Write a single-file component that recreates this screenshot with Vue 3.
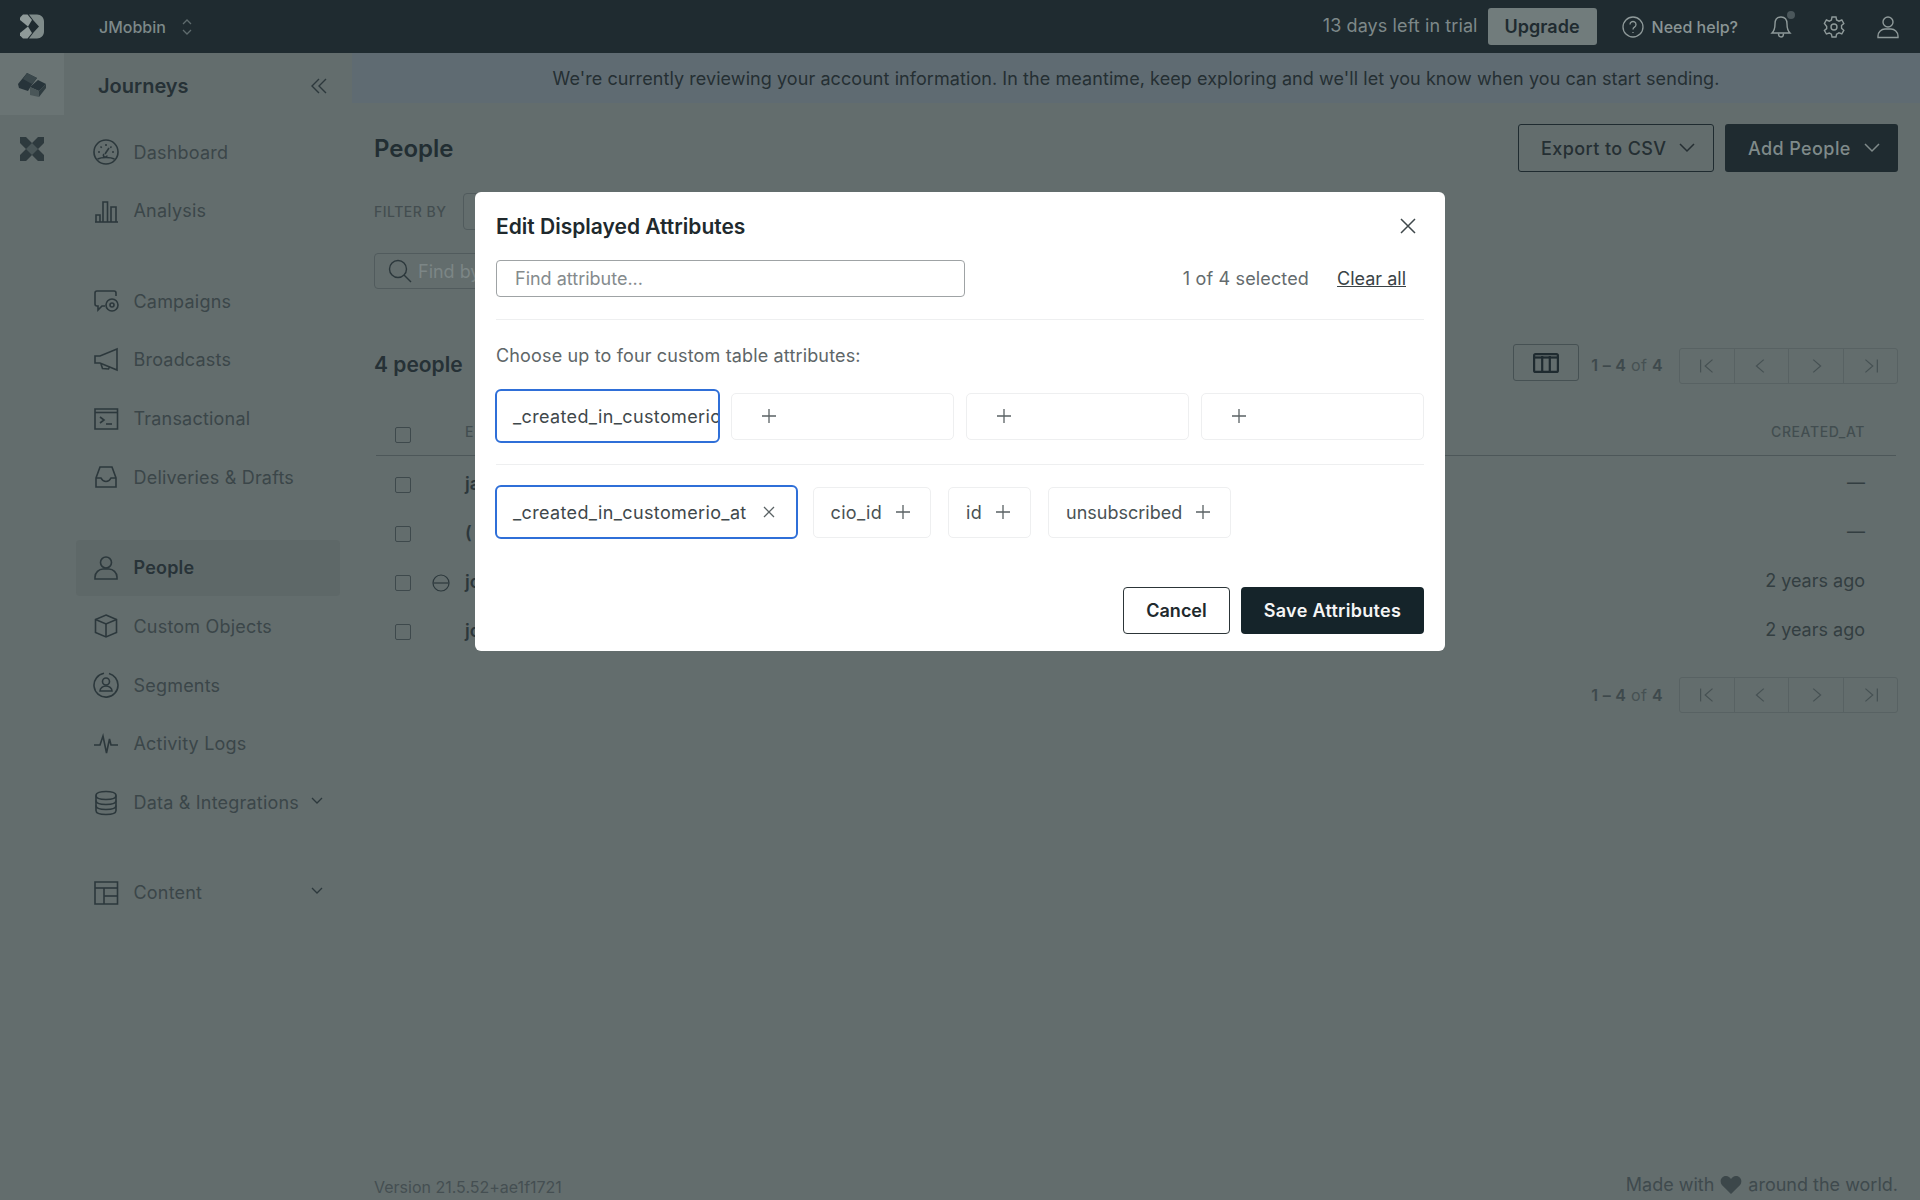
<script setup>
const navGroups = [
  [
    { label: 'Dashboard', icon: ['M13 1a12 12 0 1 0 0 24 12 12 0 0 0 0-24z', 'M13 5v2', 'M7.500 7.500l1.200 1.200', 'M18.500 7.500l-1.200 1.200', 'M5 13h2', 'M19 13h2', 'M12 15l4-6', 'M11 15a1.800 1.800 0 1 0 3 1.500', 'M4.500 20c4-2 13-2 17 0'] },
    { label: 'Analysis', icon: ['M2 24h23', 'M3 24v-7h4v7', 'M10 24V4h4.500v20', 'M18 24V9h5v15'] }
  ],
  [
    { label: 'Campaigns', icon: ['M23 8V5a2 2 0 0 0-2-2H4a2 2 0 0 0-2 2v11a2 2 0 0 0 2 2h1v4l4-4h3', 'M19 11a6 6 0 1 0 0 12 6 6 0 0 0 0-12z', 'M19 15a2 2 0 1 0 0 4 2 2 0 0 0 0-4z'] },
    { label: 'Broadcasts', icon: ['M24 2L7 9H2v7h5l17 7z', 'M8 17l1.500 4.500 6 .5 1-2'] },
    { label: 'Transactional', icon: ['M2 3h22.500v20H2z', 'M2 6.500h22.500', 'M7 11l4 3-4 3', 'M13 18h6'] },
    { label: 'Deliveries & Drafts', icon: ['M3 14L7 3h12l4 11v9H3z', 'M3 14h5c1 2 3 3.500 5 3.500s4-1.500 5-3.500h5'] }
  ],
  [
    { label: 'People', active: true, icon: ['M13 2a5.500 5.500 0 1 0 0 11 5.500 5.500 0 0 0 0-11z', 'M2 24v-2c0-4.500 4-8 8-8h6c4 0 8 3.500 8 8v2z'] },
    { label: 'Custom Objects', icon: ['M13 2l10.500 4.500v13L13 24 2.500 19.500v-13z', 'M2.500 6.500L13 11l10.500-4.500', 'M13 11v13'] },
    { label: 'Segments', icon: ['M11 1.300A12 12 0 1 0 25 13 12 12 0 0 0 16 1.500', 'M13 6a3.500 3.500 0 1 0 0 7 3.500 3.500 0 0 0 0-7z', 'M7 19c0-3 3-5 6-5s6 2 6 5z'] },
    { label: 'Activity Logs', icon: ['M1 14h6l3-9 3.500 17 3-14 1.500 6h7'] },
    { label: 'Data & Integrations', chevron: true, icon: ['M13 1.500c-5.500 0-10 1.500-10 4s4.500 4 10 4 10-1.500 10-4-4.500-4-10-4z', 'M3 5.500v15c0 2.500 4.500 4 10 4s10-1.500 10-4v-15', 'M3 10.500c0 2.500 4.500 4 10 4s10-1.500 10-4', 'M3 15.500c0 2.500 4.500 4 10 4s10-1.500 10-4'] }
  ],
  [
    { label: 'Content', chevron: true, icon: ['M2 2h22.500v22H2z', 'M2 8h22.500', 'M11 8v16', 'M11 16h13.500'] }
  ]
]

const pagerIcons = [
  ['M5 5v14', 'M18 5l-8 7 8 7'],
  ['M15 5l-8 7 8 7'],
  ['M9 5l8 7-8 7'],
  ['M7 5l8 7-8 7', 'M20 5v14']
]

const rows = [
  { text: 'ja', date: '—' },
  { text: '(', date: '—' },
  { text: 'jo', date: '2 years ago', blocked: true },
  { text: 'jo', date: '2 years ago' }
]

const emptySlots = [1, 2, 3]
const chips = ['cio_id', 'id', 'unsubscribed']
</script>

<template>
  <div class="page">
    <header class="topbar">
      <div class="logo-cell">
        <svg class="logo" viewBox="0 0 24 24" width="24" height="25">
          <path d="M0 3L3 0h4.500L12 5.500 8 12 0 5.500z" fill="#8f9a99" />
          <path d="M0 21l3 3h4.500L12 18.500 8 12 0 18.500z" fill="#8f9a99" />
          <path d="M9 0h8c4 0 7 3 7 7v10c0 4-3 7-7 7H9l4.500-6L19 12l-5.500-6z" fill="#7f8b8a" />
        </svg>
      </div>
      <div class="workspace">
        <span>JMobbin</span>
        <svg viewBox="0 0 12 18" width="12" height="18" fill="none" stroke="#5f6b6d" stroke-width="1.300">
          <path d="M2 6l4-4 4 4" />
          <path d="M2 12l4 4 4-4" />
        </svg>
      </div>
      <div class="top-right">
        <span class="trial">13 days left in trial</span>
        <span class="upgrade">Upgrade</span>
        <svg class="help-icon" viewBox="0 0 22 22" width="22" height="22" fill="none" stroke="#8f9a9a" stroke-width="1.300">
          <circle cx="11" cy="11" r="10" />
          <path d="M8 8.500a3 3 0 1 1 4.500 2.600c-1 .6-1.500 1.200-1.500 2.400" />
          <path d="M11 16v1" />
        </svg>
        <span class="help">Need help?</span>
        <span class="bell">
          <svg viewBox="0 0 22 24" width="22" height="24" fill="none" stroke="#8f9a9a" stroke-width="1.400">
            <path d="M11 2c-4 0-6 3-6 7 0 5-1 7-3 9h18c-2-2-3-4-3-9 0-4-2-7-6-7z" />
            <path d="M8.500 18.500c0 2 1 3.500 2.500 3.500s2.500-1.500 2.500-3.500" />
          </svg>
          <i class="dot"></i>
        </span>
        <svg class="gear" viewBox="0 0 24 24" width="24" height="24" fill="none" stroke="#8f9a9a" stroke-width="1.400">
          <circle cx="12" cy="12" r="3" />
          <path d="M10 2h4l.6 3 2.400 1.200 2.800-1.200 2 3.500-2.300 2 .1 2.900 2.200 1.900-2 3.500-2.800-1-2.400 1.400-.6 2.800h-4l-.6-2.800L7.300 18l-2.900 1-2-3.500 2.300-1.900V11.500L2.400 8.500l2-3.500 2.900 1.200L9.400 5z" />
        </svg>
        <svg class="user" viewBox="0 0 24 24" width="24" height="24" fill="none" stroke="#8f9a9a" stroke-width="1.400">
          <path d="M12 2a5 5 0 1 0 0 10 5 5 0 0 0 0-10z" />
          <path d="M2 22.500v-1.500c0-4 3.500-7 7-7h6c3.500 0 7 3 7 7v1.500z" />
        </svg>
      </div>
    </header>

    <div class="body">
      <aside class="rail">
        <div class="rail-item active">
          <svg viewBox="0 0 28 24" width="28" height="24">
            <path d="M0 11L9 0l10 5-6 8-3 5-9-3z" fill="#27343a" />
            <path d="M9 0l10 5-5 6-9-5z" fill="#3a474b" />
            <path d="M12 14l8-7 8 4-7 7z" fill="#27343a" />
            <path d="M12 14l9 4v6l-9-2z" fill="#4a5658" />
            <path d="M21 18l7-7v4l-7 9z" fill="#2f3c40" />
          </svg>
        </div>
        <div class="rail-item second">
          <svg viewBox="0 0 24 24" width="24" height="24">
            <path d="M0 0h6l6 6 6-6h6v6l-6 6 6 6v6h-6l-6-6-6 6H0v-6l6-6-6-6z" fill="#2e3a3e" />
            <path d="M12 6l6 6-6 6-6-6z" fill="#4a5658" />
          </svg>
        </div>
      </aside>

      <nav class="sidebar">
        <div class="side-title">
          <span>Journeys</span>
          <svg viewBox="0 0 18 16" width="18" height="16" fill="none" stroke="#2c383c" stroke-width="1.400">
            <path d="M9 1L2 8l7 7" />
            <path d="M16 1L9 8l7 7" />
          </svg>
        </div>
        <div v-for="(group, g) in navGroups" :key="g" class="nav-group" :class="{ first: g === 0 }">
          <div v-for="item in group" :key="item.label" class="nav-item" :class="{ active: item.active }">
            <svg class="nav-icon" viewBox="0 0 26 26" width="26" height="26" fill="none" stroke="#2c383c" stroke-width="1.600">
              <path v-for="d in item.icon" :key="d" :d="d" />
            </svg>
            <span class="nav-label">{{ item.label }}</span>
            <svg v-if="item.chevron" class="nav-chevron" viewBox="0 0 12 8" width="12" height="8" fill="none" stroke="#2c383c" stroke-width="1.300">
              <path d="M1 1l5 5 5-5" />
            </svg>
          </div>
        </div>
      </nav>

      <main class="main">
        <div class="banner">We're currently reviewing your account information. In the meantime, keep exploring and we'll let you know when you can start sending.</div>
        <div class="content">
          <div class="title-row">
            <h1>People</h1>
            <div class="actions">
              <span class="btn outline">Export to CSV
                <svg viewBox="0 0 16 10" width="16" height="10" fill="none" stroke="currentColor" stroke-width="1.500"><path d="M1 1l7 7 7-7" /></svg>
              </span>
              <span class="btn solid">Add People
                <svg viewBox="0 0 16 10" width="16" height="10" fill="none" stroke="currentColor" stroke-width="1.500"><path d="M1 1l7 7 7-7" /></svg>
              </span>
            </div>
          </div>

          <div class="filter-row">
            <span class="filter-label">FILTER BY</span>
            <span class="filter-box"></span>
          </div>

          <div class="search">
            <svg viewBox="0 0 24 24" width="24" height="24" fill="none" stroke="#2c383c" stroke-width="1.400">
              <circle cx="10" cy="10" r="8.500" />
              <path d="M16 16l7 7" />
            </svg>
            <span>Find by</span>
          </div>

          <div class="count-row">
            <h2>4 people</h2>
            <span class="columns-btn">
              <svg viewBox="0 0 26 20" width="26" height="20" fill="none" stroke="#1f2b30" stroke-width="2.200">
                <rect x="1.100" y="1.100" width="23.800" height="17.800" rx="1.500" />
                <path d="M1 4.500h24" />
                <path d="M9.200 3v16" />
                <path d="M16.800 3v16" />
              </svg>
            </span>
            <span class="range"><b>1 – 4</b> of <b>4</b></span>
            <div class="pager">
              <span v-for="(p, i) in pagerIcons" :key="i">
                <svg viewBox="0 0 24 24" width="22" height="22" fill="none" stroke="#465153" stroke-width="1.300">
                  <path v-for="d in p" :key="d" :d="d" />
                </svg>
              </span>
            </div>
          </div>

          <div class="table">
            <div class="t-head">
              <i class="check"></i>
              <span class="cell-icon"></span>
              <span class="th-first">E</span>
              <span class="th-last">CREATED_AT</span>
            </div>
            <div v-for="(r, i) in rows" :key="i" class="t-row">
              <i class="check"></i>
              <span class="cell-icon">
                <svg v-if="r.blocked" viewBox="0 0 18 18" width="18" height="18" fill="none" stroke="#2c383c" stroke-width="1.200">
                  <circle cx="9" cy="9" r="8" />
                  <path d="M1.500 9h15" />
                </svg>
              </span>
              <span class="td-first">{{ r.text }}</span>
              <span class="td-last">{{ r.date }}</span>
            </div>
          </div>

          <div class="bottom-pager">
            <span class="range"><b>1 – 4</b> of <b>4</b></span>
            <div class="pager">
              <span v-for="(p, i) in pagerIcons" :key="i">
                <svg viewBox="0 0 24 24" width="22" height="22" fill="none" stroke="#465153" stroke-width="1.300">
                  <path v-for="d in p" :key="d" :d="d" />
                </svg>
              </span>
            </div>
          </div>

          <footer class="footer">
            <span class="version">Version 21.5.52+ae1f1721</span>
            <span class="made">Made with
              <svg viewBox="0 0 24 22" width="22" height="20"><path d="M12 21L2 11C-1 7 1 1 6.500 1 9 1 11 2.500 12 4.500 13 2.500 15 1 17.500 1 23 1 25 7 22 11z" fill="#3c474a" /></svg>
              around the world.</span>
          </footer>
        </div>
      </main>
    </div>

    <section class="modal">
      <div class="m-head">
        <h3>Edit Displayed Attributes</h3>
        <svg class="m-close" viewBox="0 0 16 16" width="16" height="16" fill="none" stroke="#3f484b" stroke-width="1.500">
          <path d="M1 1l14 14M15 1L1 15" />
        </svg>
      </div>
      <div class="m-find">
        <span class="m-input">Find attribute...</span>
        <span class="m-count">1 of 4 selected</span>
        <span class="m-clear">Clear all</span>
      </div>
      <p class="m-hint">Choose up to four custom table attributes:</p>
      <div class="slots">
        <div class="slot filled"><span>_created_in_customerio</span></div>
        <div v-for="s in emptySlots" :key="s" class="slot">
          <svg class="plus" viewBox="0 0 14 14" width="14" height="14"><path d="M7 0v14M0 7h14" /></svg>
        </div>
      </div>
      <div class="chips">
        <div class="chip selected">
          <span>_created_in_customerio_at</span>
          <svg class="cross" viewBox="0 0 12 12" width="12" height="12"><path d="M1 1l10 10M11 1L1 11" /></svg>
        </div>
        <div v-for="c in chips" :key="c" class="chip">
          <span>{{ c }}</span>
          <svg class="plus" viewBox="0 0 14 14" width="14" height="14"><path d="M7 0v14M0 7h14" /></svg>
        </div>
      </div>
      <div class="m-actions">
        <span class="m-btn cancel">Cancel</span>
        <span class="m-btn save">Save Attributes</span>
      </div>
    </section>
  </div>
</template>

<style>
html, body { margin: 0; overflow: hidden; }
</style>

<style scoped>
* { box-sizing: border-box; }
.page {
  position: relative;
  width: 1920px;
  height: 1200px;
  overflow: hidden;
  display: flex;
  flex-direction: column;
  background: #636d6d;
  font-family: Inter, "Noto Sans", sans-serif;
  font-size: 18px;
  color: #3b4649;
}
h1, h2, h3, p { margin: 0; }

.topbar { height: 53px; flex: none; display: flex; align-items: center; background: #1f2b30; color: #8f9a9a; }
.logo-cell { width: 64px; display: flex; justify-content: center; }
.logo { margin-left: -1px; }
.workspace { margin-left: 35px; display: flex; align-items: center; gap: 15px; font-size: 16px; font-weight: 500; color: #7d8989; }
.top-right { margin-left: auto; display: flex; align-items: center; }
.trial { font-size: 18px; color: #7d8889; letter-spacing: .1px; margin-top: -2px; }
.upgrade { margin-left: 10px; width: 109px; height: 37px; display: flex; align-items: center; justify-content: center; background: #717c7c; border-radius: 3px; color: #1f2b30; font-weight: 600; }
.help-icon { margin-left: 25px; }
.help { margin-left: 8px; font-size: 16px; font-weight: 500; color: #8a9595; }
.bell { position: relative; display: flex; margin-left: 32px; }
.dot { position: absolute; right: -3px; top: -4px; width: 8px; height: 8px; border-radius: 50%; background: #4b575b; }
.gear { margin-left: 30px; }
.user { margin-left: 30px; margin-right: 20px; }

.body { flex: 1; display: flex; min-height: 0; }
.rail { width: 64px; flex: none; }
.rail-item { height: 62px; display: flex; align-items: center; justify-content: center; }
.rail-item.active { background: #6a7474; padding-top: 2px; }
.rail-item.second { padding-top: 6px; }
.sidebar { width: 288px; flex: none; }
.side-title { height: 66px; display: flex; align-items: center; justify-content: space-between; padding: 0 24px 0 34px; font-size: 20px; font-weight: 600; color: #263136; }
.nav-group { margin-top: 34.250px; display: flex; flex-direction: column; gap: 2.750px; }
.nav-group.first { margin-top: 5px; }
.nav-item { height: 56px; margin: 0 12px; padding: 0 17px 0 17px; display: flex; align-items: center; gap: 14.500px; border-radius: 4px; letter-spacing: .2px; }
.nav-item.active { background: #5e6868; font-weight: 600; color: #283338; }
.nav-icon { flex: none; }
.nav-label { flex: 1; min-width: 0; white-space: nowrap; }
.nav-chevron { flex: none; margin-left: -14.500px; margin-top: -3px; }

.main { flex: 1; min-width: 0; display: flex; flex-direction: column; }
.banner { height: 50px; flex: none; display: flex; align-items: center; justify-content: center; background: #5f6b72; color: #252f33; letter-spacing: .07px; }
.content { flex: 1; padding: 21px 22px 0; display: flex; flex-direction: column; min-height: 0; }
.title-row { display: flex; align-items: center; justify-content: space-between; height: 48px; }
h1 { font-size: 24px; font-weight: 600; color: #222e33; }
.actions { display: flex; gap: 11px; }
.btn { height: 48px; display: flex; align-items: center; border-radius: 3px; font-size: 18px; font-weight: 500; letter-spacing: .4px; }
.btn.outline { width: 196px; padding-left: 22px; gap: 12px; border: 1px solid #1f2b30; color: #252f33; }
.btn.solid { width: 173px; padding-left: 23px; gap: 13px; background: #1f2b30; color: #7f8a8a; }
.filter-row { margin-top: 21px; display: flex; align-items: center; height: 37px; }
.filter-label { width: 89px; font-size: 14px; font-weight: 500; letter-spacing: .5px; color: #434d50; }
.filter-box { width: 60px; height: 37px; border: 1px solid #515b5d; border-radius: 4px; }
.search { margin-top: 23px; width: 200px; height: 36px; border: 1px solid #515b5d; border-radius: 4px; display: flex; align-items: center; gap: 6px; padding-left: 13px; color: #7c8686; }
.count-row { margin-top: 55px; height: 37px; display: flex; align-items: center; }
h2 { font-size: 21px; font-weight: 600; color: #263136; margin-right: auto; padding-top: 4px; }
.columns-btn { width: 66px; height: 37px; border: 1px solid #465153; border-radius: 3px; display: flex; align-items: center; justify-content: center; }
.range { font-size: 16px; color: #465153; letter-spacing: .3px; }
.range b { font-weight: 600; color: #3e494c; }
.count-row .range { margin-left: 12px; margin-right: 16px; margin-top: 5px; }
.pager { display: flex; width: 219px; height: 36px; border: 1px solid #586263; border-radius: 3px; }
.count-row .pager { margin-top: 6px; }
.pager span { flex: 1; display: flex; align-items: center; justify-content: center; }
.pager span + span { border-left: 1px solid #586263; }

.table { margin: 15px 2px 0; }
.t-head { height: 60px; padding: 0 31px 0 19px; display: grid; grid-template-columns: 16px 54px 1fr auto; align-items: center; border-bottom: 1px solid #4d5759; margin-bottom: 4px; }
.t-row { height: 49px; padding: 0 31px 0 19px; display: grid; grid-template-columns: 16px 54px 1fr auto; align-items: center; }
.check { display: block; width: 16px; height: 16px; border: 1px solid #3e494c; border-radius: 2px; }
.t-head .check { margin-top: 19px; }
.cell-icon { display: flex; padding-left: 21px; }
.th-first, .th-last { font-size: 14px; font-weight: 500; letter-spacing: .6px; color: #424d50; margin-top: 12px; }
.td-first { font-weight: 600; color: #2c373b; margin-top: -3px; }
.td-last { color: #333e41; margin-top: -5px; }
.bottom-pager { margin-top: 21px; display: flex; justify-content: flex-end; align-items: center; gap: 16px; }
.footer { margin-top: auto; height: 26px; display: flex; justify-content: space-between; align-items: flex-start; }
.version { font-size: 16px; color: #454f52; padding-top: 3px; }
.made { display: inline-flex; align-items: center; gap: 6px; color: #3f4a4d; }

.modal { position: absolute; left: 475px; top: 192px; width: 970px; height: 459px; padding: 0 21px; background: #fff; border-radius: 6px; color: #4a5254; }
.m-head { height: 68px; display: flex; align-items: center; justify-content: space-between; }
h3 { font-size: 21px; font-weight: 600; color: #20292d; padding-top: 1px; }
.m-close { margin-right: 8px; }
.m-find { height: 60px; padding-bottom: 23px; display: flex; align-items: center; border-bottom: 1px solid #eeeff0; }
.m-input { width: 469px; height: 37px; display: flex; align-items: center; padding: 1px 0 0 18px; border: 1px solid #9fa3a5; border-radius: 4px; color: #858b8d; }
.m-count { margin-left: auto; color: #646b6d; letter-spacing: .15px; padding-top: 1px; }
.m-clear { margin-left: 28px; margin-right: 18px; color: #3a4346; text-decoration: underline; padding-top: 1px; }
.m-hint { margin-top: 22px; height: 26px; line-height: 28px; color: #5e6668; letter-spacing: .15px; }
.slots { margin-top: 21px; height: 54px; display: grid; grid-template-columns: repeat(4, 1fr); gap: 11.700px; align-items: center; }
.slot { height: 47px; display: flex; align-items: center; padding-left: 30px; border: 1px solid #eeeff0; border-radius: 5px; }
.slot.filled { height: 54px; margin: 0 -1px; padding-left: 16px; border: 2.500px solid #2f6fd8; border-radius: 6px; overflow: hidden; white-space: nowrap; color: #3f484b; letter-spacing: .36px; }
.plus, .cross { fill: none; stroke: #5a6264; stroke-width: 1.300; flex: none; }
.chips { margin-top: 21px; padding-top: 20px; border-top: 1px solid #eeeff0; display: flex; align-items: center; gap: 17px; }
.chip { height: 51px; display: flex; align-items: center; gap: 14px; padding: 0 20px 0 17px; border: 1px solid #eeeff0; border-radius: 5px; letter-spacing: .3px; }
.chip:last-child { letter-spacing: 0; }
.chip.selected { height: 54px; margin-left: -1px; margin-right: -2px; padding: 0 21px 0 16px; gap: 16px; border: 2.500px solid #2f6fd8; border-radius: 6px; color: #3f484b; letter-spacing: .36px; }
.m-actions { position: absolute; right: 21px; bottom: 17px; display: flex; gap: 11px; }
.m-btn { height: 47px; display: flex; align-items: center; justify-content: center; border-radius: 4px; font-weight: 600; }
.cancel { width: 107px; border: 1px solid #2c3538; color: #20292d; }
.save { width: 183px; background: #15242a; color: #f4f5f5; letter-spacing: .3px; }
</style>
